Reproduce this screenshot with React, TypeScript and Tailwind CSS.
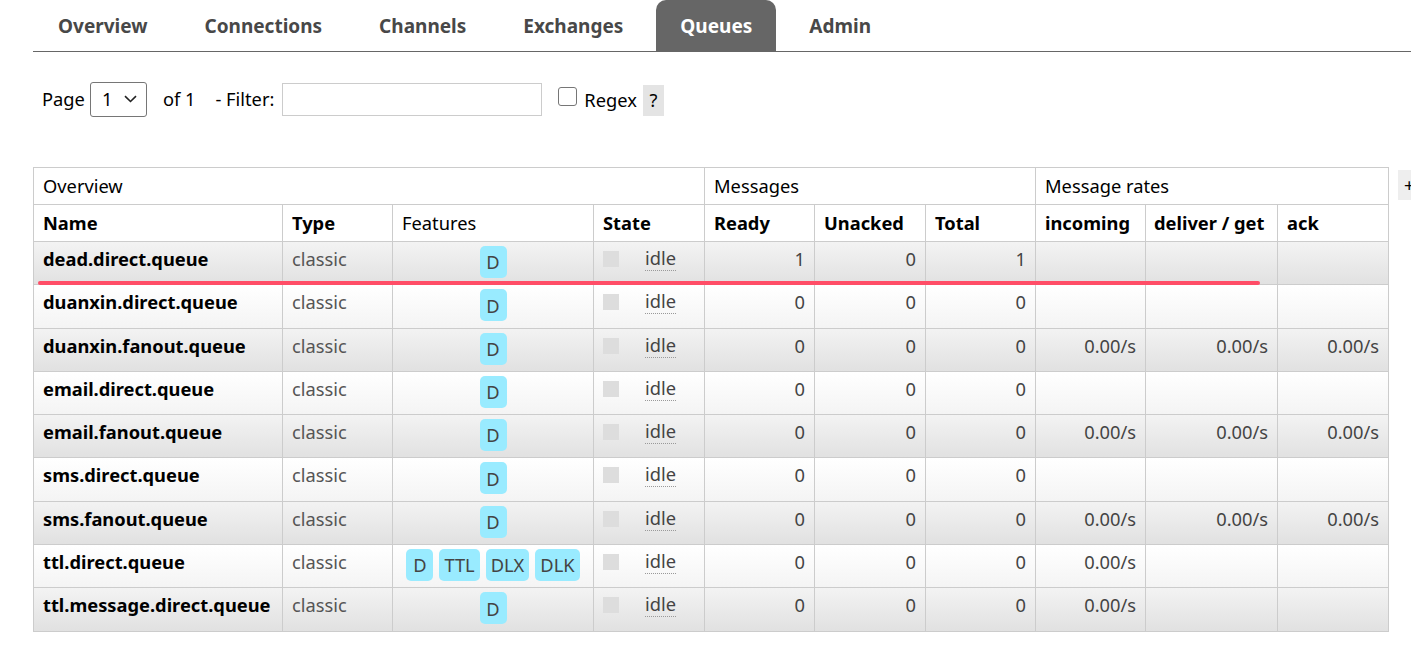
import React from "react";

type Row = {
  name: string;
  features: string[];
  ready: string;
  unacked: string;
  total: string;
  incoming: string;
  deliver: string;
  ack: string;
};

const rows: Row[] = [
  { name: "dead.direct.queue", features: ["D"], ready: "1", unacked: "0", total: "1", incoming: "", deliver: "", ack: "" },
  { name: "duanxin.direct.queue", features: ["D"], ready: "0", unacked: "0", total: "0", incoming: "", deliver: "", ack: "" },
  { name: "duanxin.fanout.queue", features: ["D"], ready: "0", unacked: "0", total: "0", incoming: "0.00/s", deliver: "0.00/s", ack: "0.00/s" },
  { name: "email.direct.queue", features: ["D"], ready: "0", unacked: "0", total: "0", incoming: "", deliver: "", ack: "" },
  { name: "email.fanout.queue", features: ["D"], ready: "0", unacked: "0", total: "0", incoming: "0.00/s", deliver: "0.00/s", ack: "0.00/s" },
  { name: "sms.direct.queue", features: ["D"], ready: "0", unacked: "0", total: "0", incoming: "", deliver: "", ack: "" },
  { name: "sms.fanout.queue", features: ["D"], ready: "0", unacked: "0", total: "0", incoming: "0.00/s", deliver: "0.00/s", ack: "0.00/s" },
  { name: "ttl.direct.queue", features: ["D", "TTL", "DLX", "DLK"], ready: "0", unacked: "0", total: "0", incoming: "0.00/s", deliver: "", ack: "" },
  { name: "ttl.message.direct.queue", features: ["D"], ready: "0", unacked: "0", total: "0", incoming: "0.00/s", deliver: "", ack: "" },
];

const tabs = ["Overview", "Connections", "Channels", "Exchanges", "Queues", "Admin"];

const cell = "border border-[#cccccc] px-[9px] align-top pt-[4px] h-[43.3px]";

export default function App() {
  return (
    <div
      className="relative w-[1411px] h-[651px] bg-white overflow-hidden text-[18.3px] text-[#444]"
      style={{ fontFamily: '"Noto Sans", "Open Sans", sans-serif' }}
    >
      {/* Tabs */}
      <div className="ml-[33px] pl-[1px] flex h-[52px] border-b border-[#666] gap-[9px]">
        {tabs.map((t) => (
          <div
            key={t}
            className={
              t === "Queues"
                ? "px-[24px] h-[51px] flex items-center rounded-t-[10px] bg-[#666666] text-white font-bold text-[19px] pt-[1px]"
                : "px-[24px] h-[51px] flex items-center text-[#484848] font-bold text-[19px] pt-[1px]"
            }
          >
            {t}
          </div>
        ))}
      </div>

      {/* Filter row */}
      <div className="flex items-center ml-[42px] mt-[29px] h-[36px] text-black">
        <span>Page</span>
        <div className="ml-[5px] w-[57px] h-[35px] border border-[#767676] rounded-[3px] flex items-center pl-[11px] gap-[12px]">
          <span>1</span>
          <svg width="13" height="8" viewBox="0 0 13 8" fill="none">
            <path d="M1 1.2 L6.5 6.5 L12 1.2" stroke="#222" strokeWidth="1.6" />
          </svg>
        </div>
        <span className="ml-[16px]">of 1</span>
        <span className="ml-[20px]">- Filter:</span>
        <div className="ml-[8px] w-[260px] h-[33px] border border-[#cccccc]" />
        <div className="ml-[16px] w-[19px] h-[19px] border border-[#767676] rounded-[3px] mb-[6px]" />
        <span className="ml-[7px] mt-[2px]">Regex</span>
        <span className="ml-[6px] w-[21px] h-[31px] bg-[#e4e4e4] flex items-center justify-center mt-[2px]">?</span>
      </div>

      {/* Table */}
      <div className="relative mt-[50px] ml-[33px] flex items-start">
        <table className="border-collapse table-fixed w-[1355px]">
          <colgroup>
            <col className="w-[249px]" />
            <col className="w-[110px]" />
            <col className="w-[201px]" />
            <col className="w-[111px]" />
            <col className="w-[110px]" />
            <col className="w-[111px]" />
            <col className="w-[110px]" />
            <col className="w-[110px]" />
            <col className="w-[132px]" />
            <col className="w-[111px]" />
          </colgroup>
          <thead>
            <tr className="h-[37px] text-black">
              <th colSpan={4} className="border border-[#cccccc] px-[9px] text-left font-normal">Overview</th>
              <th colSpan={3} className="border border-[#cccccc] px-[9px] text-left font-normal">Messages</th>
              <th colSpan={3} className="border border-[#cccccc] px-[9px] text-left font-normal">Message rates</th>
            </tr>
            <tr className="h-[37px] text-black">
              <th className="border border-[#cccccc] px-[9px] text-left font-bold">Name</th>
              <th className="border border-[#cccccc] px-[9px] text-left font-bold">Type</th>
              <th className="border border-[#cccccc] px-[9px] text-left font-normal">Features</th>
              <th className="border border-[#cccccc] px-[9px] text-left font-bold">State</th>
              <th className="border border-[#cccccc] px-[9px] text-left font-bold">Ready</th>
              <th className="border border-[#cccccc] px-[9px] text-left font-bold">Unacked</th>
              <th className="border border-[#cccccc] px-[9px] text-left font-bold">Total</th>
              <th className="border border-[#cccccc] px-[9px] text-left font-bold">incoming</th>
              <th className="border border-[#cccccc] px-[8px] text-left font-bold whitespace-nowrap">deliver / get</th>
              <th className="border border-[#cccccc] px-[9px] text-left font-bold">ack</th>
            </tr>
          </thead>
          <tbody>
            {rows.map((r, i) => (
              <tr
                key={r.name}
                className={
                  i % 2 === 0
                    ? "bg-gradient-to-b from-[#f3f3f3] to-[#e1e1e1]"
                    : "bg-gradient-to-b from-[#ffffff] to-[#f4f4f4]"
                }
              >
                <td className={cell + " font-bold text-black whitespace-nowrap leading-[26px]"}>{r.name}</td>
                <td className={cell + " text-[#555] leading-[26px]"}>classic</td>
                <td className={cell + " px-[8px]"}>
                  <div className="flex justify-center gap-[6px]">
                    {r.features.map((f) => (
                      <span
                        key={f}
                        className="h-[32px] px-[5px] min-w-[27px] rounded-[5px] bg-[#99ebff] text-[#444] flex items-center justify-center"
                      >
                        {f}
                      </span>
                    ))}
                  </div>
                </td>
                <td className={cell + " leading-[26px]"}>
                  <div className="flex items-start">
                    <span className="mt-[5px] w-[16px] h-[16px] bg-[#dddddd]" />
                    <span className="ml-[26px] border-b border-dotted border-[#999] leading-[24px]">idle</span>
                  </div>
                </td>
                <td className={cell + " text-right leading-[26px]"}>{r.ready}</td>
                <td className={cell + " text-right leading-[26px]"}>{r.unacked}</td>
                <td className={cell + " text-right leading-[26px]"}>{r.total}</td>
                <td className={cell + " text-right leading-[26px]"}>{r.incoming}</td>
                <td className={cell + " text-right leading-[26px]"}>{r.deliver}</td>
                <td className={cell + " text-right leading-[26px]"}>{r.ack}</td>
              </tr>
            ))}
          </tbody>
        </table>
        <div className="ml-[9px] mt-[3px] w-[20px] h-[30px] bg-[#eeeeee] pl-[6px] text-black leading-[30px] shrink-0">+</div>

        {/* annotation line */}
        <div className="absolute left-[5px] top-[114px] w-[1222px] h-[4px] bg-[#ff4d67] rounded-full" />
      </div>
    </div>
  );
}
